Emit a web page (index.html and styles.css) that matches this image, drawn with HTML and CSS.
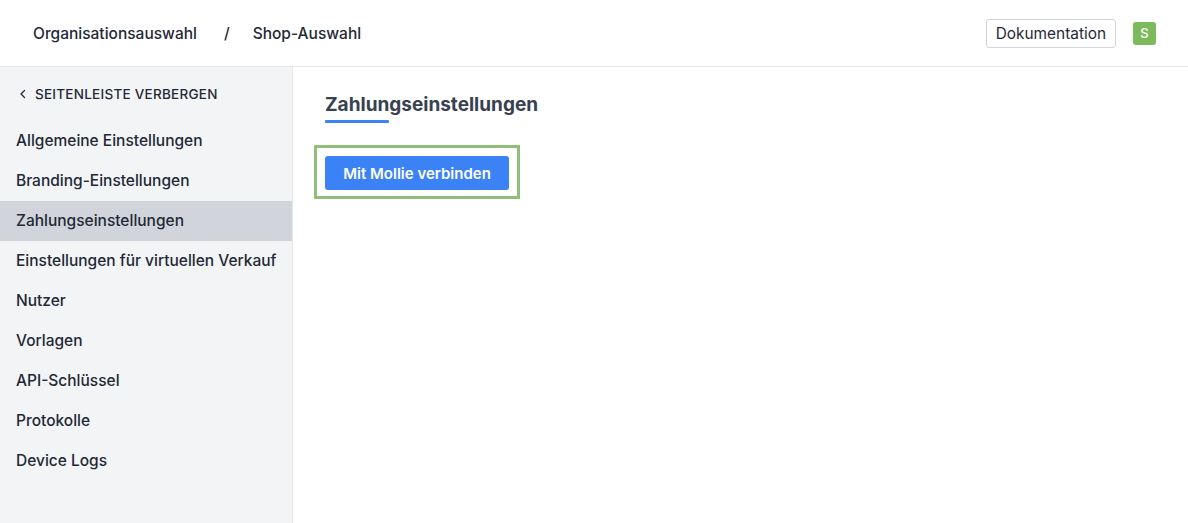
FILE: index.html
```html
<!DOCTYPE html>
<html lang="de">
<head>
<meta charset="utf-8">
<title>Zahlungseinstellungen</title>
<link rel="stylesheet" href="styles.css">
</head>
<body>
<header class="topbar">
  <nav class="crumbs">
    <span class="crumb">Organisationsauswahl</span>
    <span class="sep">/</span>
    <span class="crumb">Shop-Auswahl</span>
  </nav>
  <div class="actions">
    <a class="doc-btn">Dokumentation</a>
    <span class="avatar">S</span>
  </div>
</header>
<div class="layout">
  <aside class="sidebar">
    <div class="hide-link">
      <svg width="10" height="10" viewBox="0 0 10 10"><path d="M6.5 1.5 L3 5 L6.5 8.5" fill="none" stroke="#1f2937" stroke-width="1.3" stroke-linecap="round" stroke-linejoin="round"/></svg>
      <span>SEITENLEISTE VERBERGEN</span>
    </div>
    <ul class="menu">
      <li>Allgemeine Einstellungen</li>
      <li>Branding-Einstellungen</li>
      <li class="active">Zahlungseinstellungen</li>
      <li>Einstellungen für virtuellen Verkauf</li>
      <li>Nutzer</li>
      <li>Vorlagen</li>
      <li>API-Schlüssel</li>
      <li>Protokolle</li>
      <li>Device Logs</li>
    </ul>
  </aside>
  <main class="content">
    <h1 class="title">Zahlungseinstellungen</h1>
    <div class="highlight">
      <button class="primary">Mit Mollie verbinden</button>
    </div>
  </main>
</div>
</body>
</html>
```
FILE: styles.css
```css
* { box-sizing: border-box; }
html, body { margin: 0; padding: 0; height: 100%; }
body {
  font-family: Inter, "Liberation Sans", Arial, sans-serif;
  color: #1f2937;
  background: #fff;
  display: flex;
  flex-direction: column;
}
.topbar {
  height: 67px;
  border-bottom: 1px solid #e5e7eb;
  display: flex;
  align-items: center;
  justify-content: space-between;
  padding: 0 32px 0 33px;
  flex-shrink: 0;
}
.crumbs {
  display: flex;
  align-items: center;
  font-size: 15.5px;
  font-weight: 500;
  color: #1f2937;
}
.sep { margin: 0 23px 0 27px; }
.actions { display: flex; align-items: center; gap: 17px; }
.doc-btn {
  font-size: 15.4px;
  color: #1f2937;
  border: 1px solid #d1d5db;
  border-radius: 3px;
  padding: 0 9px;
  height: 29px;
  line-height: 27px;
}
.avatar {
  width: 23px;
  height: 23px;
  background: #7dba5c;
  color: #fff;
  border-radius: 3px;
  font-size: 13px;
  font-weight: 500;
  display: flex;
  align-items: center;
  justify-content: center;
}
.layout { display: flex; flex: 1; }
.sidebar {
  width: 293px;
  background: #f3f4f6;
  border-right: 1px solid #e5e7eb;
  padding-top: 17px;
  flex-shrink: 0;
}
.hide-link {
  display: flex;
  align-items: center;
  gap: 7px;
  padding-left: 18px;
  font-size: 13.5px;
  font-weight: 500;
  letter-spacing: 0.25px;
  height: 20px;
  color: #1f2937;
}
.menu {
  list-style: none;
  margin: 17px 0 0;
  padding: 0;
}
.menu li {
  height: 40px;
  line-height: 40px;
  padding-left: 16px;
  font-size: 15.5px;
  font-weight: 500;
  color: #1f2937;
}
.menu li.active { background: #d1d5db; }
.content { flex: 1; padding: 26px 0 0 21px; }
.title {
  margin: 0 0 0 11px;
  font-size: 19px;
  font-weight: 700;
  color: #374151;
  display: inline-block;
  position: relative;
  padding-bottom: 7px;
}
.title::after {
  content: "";
  position: absolute;
  left: 0;
  bottom: 0;
  width: 64px;
  height: 3px;
  background: #3b82f6;
  border-radius: 1px;
}
.highlight {
  margin-top: 22px;
  border: 3px solid #8fc078;
  width: 206px;
  height: 54px;
  padding: 8px;
}
.primary {
  background: #3b82f6;
  color: #fff;
  border: 0;
  border-radius: 3px;
  height: 34px;
  width: 184px;
  font-family: inherit;
  font-size: 15px;
  font-weight: 600;
  padding: 0;
}
```
